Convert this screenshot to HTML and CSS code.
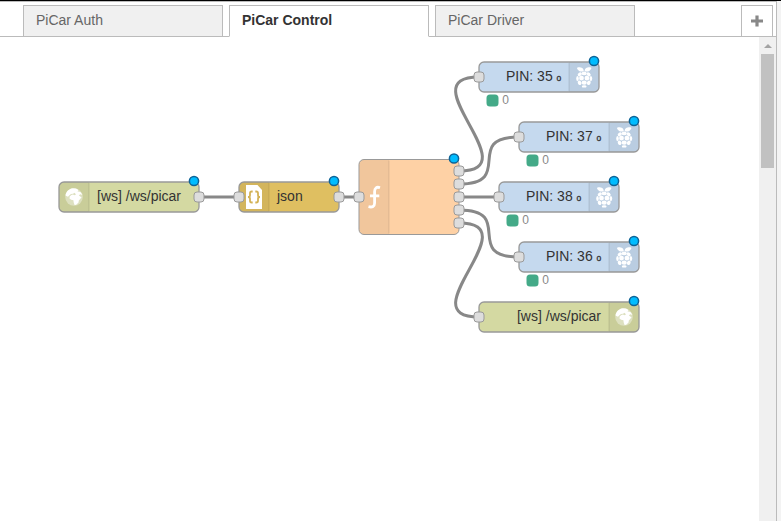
FILE: index.html
```
<!DOCTYPE html>
<html lang="en">
<head>
<meta charset="utf-8">
<title>PiCar flows</title>
<link rel="stylesheet" href="styles.css">
</head>
<body>
<div class="workspace">
  <header class="tabs">
    <div class="tab">PiCar Auth</div>
    <div class="tab active">PiCar Control</div>
    <div class="tab">PiCar Driver</div>
    <button class="add" aria-label="Add flow"><svg width="12" height="12" viewBox="0 0 12 12"><path d="M6 .5v11M0 6h12"/></svg></button>
  </header>
  <main class="main">
    <svg class="flow" width="759" height="484" viewBox="0 37 759 484">
      <defs>
        <g id="port"><rect class="port" x="-5" y="-5" width="10" height="10" rx="3"/></g>
        <g id="dot"><circle class="changed" r="4.6"/></g>
        <g id="globe">
          <circle r="8.8" fill="#fff" opacity=".38"/>
          <path fill="#fff" d="M-8.5-1.5C-8-5-5.5-8-1.5-8.7L2-8.4 4.5-7 3.5-5.6 5.6-5.3 7-4.6 8.3-2 6.4-2.8 4.8-1.8 6.2-.5 7.6.2 6 2.2 4.8 3.6 4.5 5.5 2.2 7.8.6 7.9-.3 5.4-.6 3.2-2.8 2.8-4.5 1.4-4.3-.6-2.6-2-1-2.4.4-1.8 2-2.6.6-4.2-1-3.2-3-3-4.8-1.6-6-.2Z"/>
        </g>
        <g id="berry" fill="#fff">
          <path d="M-.4-6.3C-2-5.4-4.6-5.4-5.6-6.8-6.4-7.7-7.4-8.6-7.1-9.6-5.4-10-1-10.9-.4-6.3ZM.4-6.3C2-5.4 4.6-5.4 5.6-6.8 6.4-7.7 7.4-8.6 7.1-9.6 5.4-10 1-10.9.4-6.3Z"/>
          <ellipse cy="-3.9" rx="2.5" ry="1.9"/>
          <ellipse cx="-4.4" cy="-3" rx="2.3" ry="1.7" transform="rotate(-40 -4.4 -3)"/>
          <ellipse cx="4.4" cy="-3" rx="2.3" ry="1.7" transform="rotate(40 4.4 -3)"/>
          <ellipse cx="-2.7" cy=".8" rx="2.4" ry="2.5"/>
          <ellipse cx="2.7" cy=".8" rx="2.4" ry="2.5"/>
          <ellipse cx="-6.7" cy="1.2" rx="1.3" ry="2.6"/>
          <ellipse cx="6.7" cy="1.2" rx="1.3" ry="2.6"/>
          <ellipse cy="5.4" rx="2.6" ry="2.1"/>
          <ellipse cx="-4.6" cy="5.5" rx="1.8" ry="2.3" transform="rotate(-25 -4.6 5.5)"/>
          <ellipse cx="4.6" cy="5.5" rx="1.8" ry="2.3" transform="rotate(25 4.6 5.5)"/>
          <ellipse cy="9.1" rx="2.4" ry="1.2"/>
        </g>
        <g id="pin">
          <rect class="node" width="120" height="30" rx="5" fill="#c5d9ee"/>
          <path class="shade" d="M90 .5h25a4.5 4.5 0 0 1 4.5 4.5v20a4.5 4.5 0 0 1-4.5 4.5H90Z"/>
          <path class="divider" d="M90 1v28"/>
          <use href="#berry" x="105.2" y="15.3"/>
          <use href="#port" y="15"/>
          <use href="#dot" x="115" y="-1"/>
          <rect class="status" x="9" y="34" width="9" height="9" rx="2"/>
          <text class="status-text" x="23.3" y="42">0</text>
        </g>
      </defs>

      <g class="wires">
        <path d="M199 197H239M339 197H359M459 197H499"/>
        <path d="M459 171C531 171 407 77 479 77"/>
        <path d="M459 184C516 184 462 137 519 137"/>
        <path d="M459 210C516 210 462 257 519 257"/>
        <path d="M459 223C531 223 407 317 479 317"/>
      </g>

      <g transform="translate(59 182)">
        <rect class="node" width="140" height="30" rx="5" fill="#d4d9a2"/>
        <path class="shade" d="M30 .5H5A4.5 4.5 0 0 0 .5 5v20A4.5 4.5 0 0 0 5 29.5h25Z"/>
        <path class="divider" d="M30 1v28"/>
        <use href="#globe" x="15" y="15"/>
        <text class="label" x="38" y="19">[ws] /ws/picar</text>
        <use href="#port" x="140" y="15"/>
        <use href="#dot" x="135" y="-1"/>
      </g>

      <g transform="translate(239 182)">
        <rect class="node" width="100" height="30" rx="5" fill="#dfbf61"/>
        <path class="shade" d="M30 .5H5A4.5 4.5 0 0 0 .5 5v20A4.5 4.5 0 0 0 5 29.5h25Z"/>
        <path class="divider" d="M30 1v28"/>
        <path fill="#fff" d="M7 3h11.500l4.500 5v19H7Z"/>
        <path class="brace" d="M13.700 9.500h-1q-1.700 0-1.700 1.700v2q0 1.800-2 1.800 2 0 2 1.800v2q0 1.700 1.700 1.700h1M16.300 9.500h1q1.700 0 1.700 1.700v2q0 1.800 2 1.800-2 0-2 1.800v2q0 1.700-1.700 1.700h-1"/>
        <text class="label" x="38" y="19">json</text>
        <use href="#port" y="15"/>
        <use href="#port" x="100" y="15"/>
        <use href="#dot" x="95" y="-1"/>
      </g>

      <g transform="translate(359 159.500)">
        <rect class="node thin" width="100" height="75" rx="5" fill="#fed1a5"/>
        <path class="shade" d="M30 .5H5A4.5 4.5 0 0 0 .5 5v65A4.5 4.5 0 0 0 5 74.5h25Z"/>
        <path class="divider" d="M30 1v73"/>
        <path class="func" d="M21 28.200c-3.300-1.200-5.400.2-5.400 3.800v11.500c0 3.500-2.200 4.600-6.100 3.700M11 36.300h9.300"/>
        <use href="#port" y="37.500"/>
        <use href="#port" x="100" y="11.500"/>
        <use href="#port" x="100" y="24.500"/>
        <use href="#port" x="100" y="37.500"/>
        <use href="#port" x="100" y="50.500"/>
        <use href="#port" x="100" y="63.500"/>
        <use href="#dot" x="95" y="-1"/>
      </g>

      <use href="#pin" x="479" y="62"/>
      <text class="label" x="506" y="81">PIN: 35 <tspan class="small">o</tspan></text>
      <use href="#pin" x="519" y="122"/>
      <text class="label" x="546" y="141">PIN: 37 <tspan class="small">o</tspan></text>
      <use href="#pin" x="499" y="182"/>
      <text class="label" x="526" y="201">PIN: 38 <tspan class="small">o</tspan></text>
      <use href="#pin" x="519" y="242"/>
      <text class="label" x="546" y="261">PIN: 36 <tspan class="small">o</tspan></text>

      <g transform="translate(479 302)">
        <rect class="node" width="160" height="30" rx="5" fill="#d4d9a2"/>
        <path class="shade" d="M130 .5h25a4.5 4.5 0 0 1 4.5 4.5v20a4.5 4.5 0 0 1-4.5 4.5h-25Z"/>
        <path class="divider" d="M130 1v28"/>
        <use href="#globe" x="145" y="15"/>
        <text class="label end" x="122" y="19">[ws] /ws/picar</text>
        <use href="#port" y="15"/>
        <use href="#dot" x="155" y="-1"/>
      </g>
    </svg>
    <div class="scrollbar"><div class="arrow"></div><div class="thumb"></div></div>
  </main>
</div>
</body>
</html>
```
FILE: styles.css
```
* { box-sizing: border-box; }
body {
  margin: 0;
  height: 521px;
  overflow: hidden;
  background: #f3f3f3;
  border-top: 1px solid #000;
  font: 14px/20px "Liberation Sans", Arial, sans-serif;
}
.workspace {
  width: 777px;
  height: 520px;
  background: #fff;
  border-top: 1px solid #bbb;
  border-right: 1px solid #bbb;
}
.tabs {
  display: flex;
  gap: 6px;
  height: 35px;
  padding: 3px 3px 0 23px;
  background: linear-gradient(#bbb, #bbb) bottom / 100% 1px no-repeat;
}
.tab {
  width: 200px;
  height: 32px;
  padding: 4px 12px;
  border: 1px solid #bbb;
  background: #f0f0f0;
  color: #666;
}
.tab.active {
  background: #fff;
  border-bottom-color: #fff;
  color: #333;
  font-weight: bold;
}
.add {
  width: 32px;
  height: 32px;
  margin-left: auto;
  padding: 0;
  border: 1px solid #bbb;
  background: #fff;
  display: grid;
  place-items: center;
}
.add path { stroke: #888; stroke-width: 3.2; }
.main { display: flex; height: 484px; }
.flow { flex: none; display: block; }
.scrollbar {
  width: 17px;
  padding: 7px 2px 0;
  background: #f0f0f0;
}
.arrow {
  width: 8px;
  height: 4px;
  margin: 0 auto 6px 3px;
  background: #a3a3a3;
  clip-path: polygon(50% 0, 100% 100%, 0 100%);
}
.thumb { width: 13px; height: 114px; background: #c1c1c1; }
.wires { fill: none; stroke: #888; stroke-width: 3; }
.node { stroke: #999; stroke-width: 1.3; }
.node.thin { stroke-width: 1; }
.shade { fill: #000; fill-opacity: .05; }
.divider { stroke: #000; stroke-opacity: .1; stroke-width: 1; }
.port { fill: #ddd; stroke: #999; stroke-width: 1; }
.changed { fill: #00bcff; stroke: #0f6396; stroke-width: 1.5; }
.label { fill: #333; font-size: 14px; }
.end { text-anchor: end; }
.small { font-size: 8.5px; stroke: #333; stroke-width: .3px; }
.status { fill: #4a8; stroke: #4a8; stroke-width: 3; }
.status-text { fill: #888; font-size: 12px; }
.brace { fill: none; stroke: #d3b357; stroke-width: 1.8; }
.func { fill: none; stroke: #fff; stroke-width: 2.8; }
```
